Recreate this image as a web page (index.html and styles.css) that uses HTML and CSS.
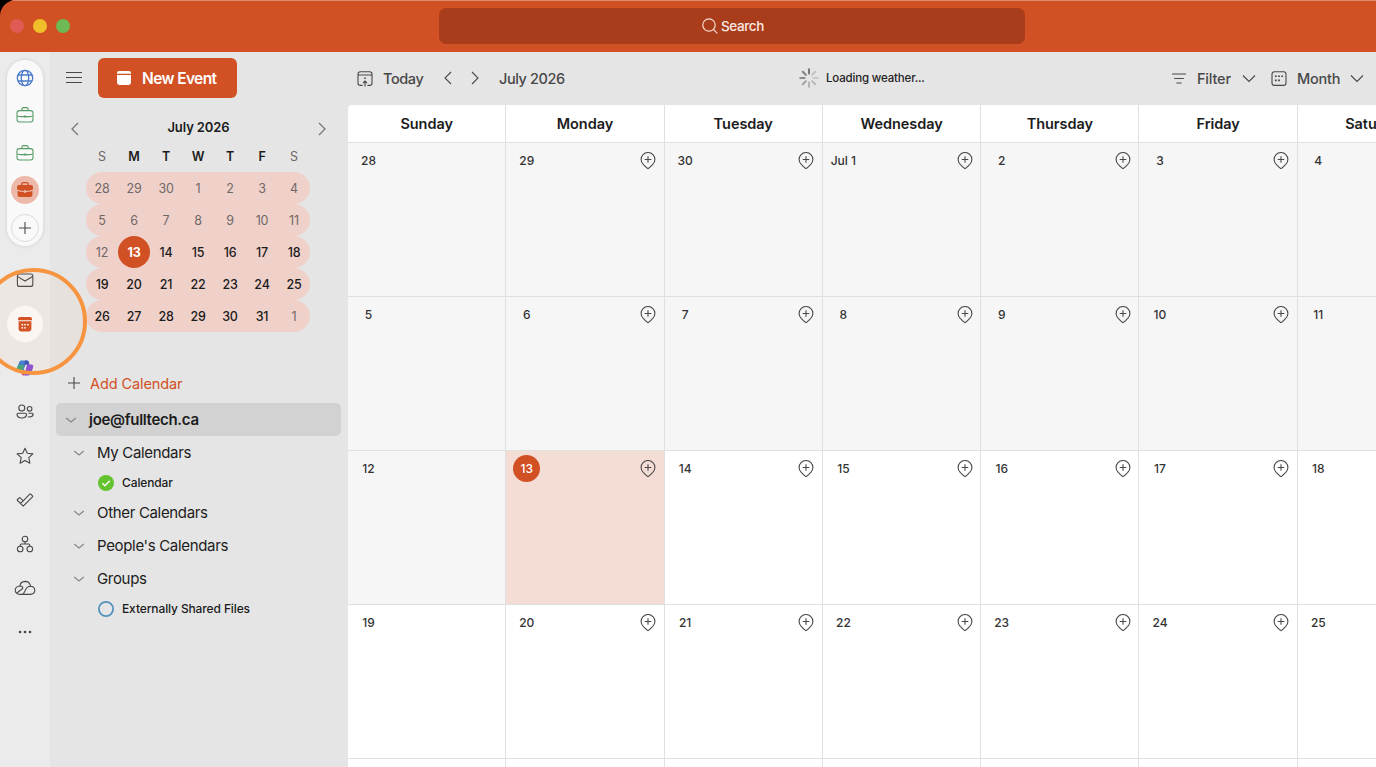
FILE: index.html
```html
<!DOCTYPE html>
<html lang="en">
<head>
    <meta charset="UTF-8">
    <meta name="viewport" content="width=device-width, initial-scale=1.0">
    <title>Calendar</title>
    <link rel="stylesheet" href="styles.css">
</head>
<body>
    <!-- Shared icons -->
    <svg class="sprite">
        <symbol id="pin" viewBox="0 0 16 18">
            <path d="M8 16.6 C7.2 16.6 5.2 14.2 3.2 12.4 A6.9 6.9 0 1 1 12.8 12.4 C10.8 14.2 8.8 16.6 8 16.6Z M8 4.2 V10.8 M4.7 7.5 H11.3"/>
        </symbol>
        <symbol id="briefcase" viewBox="0 0 18 18">
            <rect x="1" y="4.6" width="16" height="11.4" rx="2.4"/>
            <path d="M5.8 4.6 V3.4 Q5.8 1.6 7.4 1.6 H10.6 Q12.2 1.6 12.2 3.4 V4.6 M1.4 10 Q3 10.6 5 10.6 H13 Q15 10.6 16.6 10 M9 9.3 V11.8"/>
        </symbol>
        <symbol id="down" viewBox="0 0 12 8">
            <path d="M1.2 2 L6 6 L10.8 2"/>
        </symbol>
        <symbol id="left" viewBox="0 0 10 14">
            <path d="M8 1 L2 7 L8 13"/>
        </symbol>
        <symbol id="right" viewBox="0 0 10 14">
            <path d="M2 1 L8 7 L2 13"/>
        </symbol>
    </svg>

    <div class="window">
        <header class="titlebar">
            <div class="lights">
                <span class="light red"></span>
                <span class="light yellow"></span>
                <span class="light green"></span>
            </div>
            <div class="search">
                <svg class="icon" width="16" height="16" viewBox="0 0 16 16"><circle cx="7" cy="7" r="6.2"/><path d="M11.5 11.5 L15.3 15.3"/></svg>
                <span>Search</span>
            </div>
        </header>

        <div class="main">
            <nav class="rail">
                <div class="accounts">
                    <span class="account"><svg class="icon globe" width="18" height="18" viewBox="0 0 18 18"><circle cx="9" cy="9" r="7.7"/><ellipse cx="9" cy="9" rx="3.7" ry="7.7"/><path d="M2 6 H16 M2 12 H16"/></svg></span>
                    <span class="account"><svg class="icon case" width="18" height="18"><use href="#briefcase"/></svg></span>
                    <span class="account"><svg class="icon case" width="18" height="18"><use href="#briefcase"/></svg></span>
                    <span class="account current">
                        <svg width="18" height="18" viewBox="0 0 18 18"><path fill="none" stroke="#d15024" stroke-width="1.4" d="M5.8 4.4 V3 Q5.8 1.6 7.4 1.6 H10.6 Q12.2 1.6 12.2 3 V4.4"/><path fill="#d15024" d="M3 4 H15 Q17 4 17 6 V8.6 Q14 10 9.8 10 V9.1 H8.2 V10 Q4 10 1 8.6 V6 Q1 4 3 4Z M1.6 10 Q4 11 8.2 11 V12 H9.8 V11 Q14 11 16.4 10 V14 Q16.4 16 14.4 16 H3.6 Q1.6 16 1.6 14Z"/></svg>
                    </span>
                    <span class="account add"><svg class="icon" width="14" height="14" viewBox="0 0 14 14"><path d="M7 1 V13 M1 7 H13"/></svg></span>
                </div>
                <div class="apps">
                    <span class="app"><svg class="icon" width="18" height="18" viewBox="0 0 18 18"><rect x="1.4" y="3" width="15.4" height="12.4" rx="2"/><path d="M1.6 5.6 L9 10 L16.6 5.6"/></svg></span>
                    <span class="app"><span class="app-active"><svg width="16" height="16" viewBox="0 0 16 16"><path fill="#d15024" d="M3 1 H13 Q15 1 15 3 V4.2 H1 V3 Q1 1 3 1Z M1.6 5.2 H14.4 V13 Q14.4 15.4 12 15.4 H4 Q1.6 15.4 1.6 13Z"/><g fill="#fff"><circle cx="5.3" cy="8.7" r="0.9"/><circle cx="8" cy="8.7" r="0.9"/><circle cx="10.9" cy="8.7" r="0.9"/><circle cx="5.3" cy="11.8" r="0.9"/><circle cx="8" cy="11.8" r="0.9"/></g></svg></span></span>
                    <span class="app"><svg width="18" height="18" viewBox="0 0 18 18"><path fill="#3f7fd6" d="M5 1.6 H11 Q12.4 1.6 12.9 3.4 L13.4 5.5 H9.4 L7.6 11.6 H2.6 Q0.4 11.6 1.2 9 L3 3.4 Q3.6 1.6 5 1.6Z"/><path fill="#3da77e" d="M1 9 L2 6 H8 L6.6 11.6 H3 Q0.6 11.6 1 9Z"/><path fill="#8a4fd8" d="M11 5.5 H15.2 Q17.8 5.5 17.2 8 L15.4 14 Q14.8 16.4 12.4 16.4 H8 L9.5 11.6Z"/><path fill="#d8527c" d="M4.8 11.6 H9.5 L8 16.4 H7 Q5.6 16.4 5.2 14Z"/><path fill="#3552b8" d="M9 1.6 H11 Q12.4 1.6 12.9 3.4 L13.4 5.5 H9.4 L8.4 8Z"/></svg></span>
                    <span class="app"><svg class="icon" width="18" height="18" viewBox="0 0 18 18"><circle cx="5.8" cy="5" r="3"/><circle cx="13.6" cy="5.8" r="2.3"/><path d="M2.2 10.2 H9.4 Q10.6 10.2 10.6 11.4 Q10.4 15 5.8 15 Q1.2 15 1 11.4 Q1 10.2 2.2 10.2Z M12.4 10.2 H16 Q17.2 10.2 17.2 11.2 Q16.8 14 13.6 14 L11.8 13.7"/></svg></span>
                    <span class="app"><svg class="icon" width="18" height="18" viewBox="0 0 18 18"><path stroke-linejoin="round" d="M9 1.2 L11.3 6.2 L16.9 6.9 L12.8 10.7 L13.9 16.2 L9 13.5 L4.1 16.2 L5.2 10.7 L1.1 6.9 L6.7 6.2Z"/></svg></span>
                    <span class="app"><svg class="icon" width="18" height="18" viewBox="0 0 18 18"><path stroke-linejoin="round" d="M7.2 15.2 L1.5 9.5 Q1 9 1.5 8.5 L3.2 6.8 Q3.7 6.3 4.2 6.8 L7.2 9.8 L13.8 3.2 Q14.3 2.7 14.8 3.2 L16.5 4.9 Q17 5.4 16.5 5.9Z M4.5 12.5 L7.2 9.8"/></svg></span>
                    <span class="app"><svg class="icon" width="18" height="18" viewBox="0 0 18 18"><circle cx="9" cy="4" r="2.8"/><circle cx="4.2" cy="14" r="2.8"/><circle cx="13.8" cy="14" r="2.8"/><path d="M9 6.8 V9 M4.2 11.2 V10.2 Q4.2 9 5.4 9 H12.6 Q13.8 9 13.8 10.2 V11.2"/></svg></span>
                    <span class="app"><svg class="icon" width="22" height="18" viewBox="0 0 22 18"><path d="M6 15.4 H16.4 Q20.8 15 20.8 11.2 Q20.6 7.4 16.6 7.2 Q15.6 2.4 11 2.4 Q6.6 2.6 5.8 7 Q1.4 7.4 1.2 11.2 Q1.4 15 6 15.4Z M2.8 14 L8 10 Q9.4 9 8.4 7.8 Q7.6 7 5.8 7 M8.6 15.4 Q9.6 14.8 11 12 Q12.6 7.2 16.6 7.2"/></svg></span>
                    <span class="app"><svg width="14" height="4" viewBox="0 0 14 4" fill="#444"><circle cx="2" cy="2" r="1.3"/><circle cx="7" cy="2" r="1.3"/><circle cx="12" cy="2" r="1.3"/></svg></span>
                </div>
            </nav>

            <aside class="sidebar">
                <div class="side-top">
                    <svg class="icon" width="18" height="14" viewBox="0 0 18 14"><path d="M1 1.5 H17 M1 6.5 H17 M1 11.5 H17"/></svg>
                    <button class="new-event">
                        <svg width="16" height="16" viewBox="0 0 16 16" fill="#fff"><path d="M3 1 H13 Q15 1 15 3 V3.8 H1 V3 Q1 1 3 1Z M1 5 H15 V12.6 Q15 15 12.6 15 H3.4 Q1 15 1 12.6Z"/></svg>
                        <span>New Event</span>
                    </button>
                </div>

                <div class="mini-head">
                    <svg class="icon" width="10" height="14"><use href="#left"/></svg>
                    <span>July 2026</span>
                    <svg class="icon" width="10" height="14"><use href="#right"/></svg>
                </div>
                <div class="mini">
                    <div class="mini-row names"><span class="off">S</span><span>M</span><span>T</span><span>W</span><span>T</span><span>F</span><span class="off">S</span></div>
                    <div class="mini-row week"><span class="off">28</span><span class="off">29</span><span class="off">30</span><span class="off">1</span><span class="off">2</span><span class="off">3</span><span class="off">4</span></div>
                    <div class="mini-row week"><span class="off">5</span><span class="off">6</span><span class="off">7</span><span class="off">8</span><span class="off">9</span><span class="off">10</span><span class="off">11</span></div>
                    <div class="mini-row week"><span class="off">12</span><span class="today">13</span><span>14</span><span>15</span><span>16</span><span>17</span><span>18</span></div>
                    <div class="mini-row week"><span>19</span><span>20</span><span>21</span><span>22</span><span>23</span><span>24</span><span>25</span></div>
                    <div class="mini-row week"><span>26</span><span>27</span><span>28</span><span>29</span><span>30</span><span>31</span><span class="off">1</span></div>
                </div>

                <div class="add-calendar">
                    <svg class="icon" width="12" height="12" viewBox="0 0 12 12"><path d="M6 0 V12 M0 6 H12"/></svg>
                    <span>Add Calendar</span>
                </div>
                <div class="mailbox">
                    <svg class="icon chev" width="12" height="8"><use href="#down"/></svg>
                    <span>joe@fulltech.ca</span>
                </div>
                <div class="group"><svg class="icon chev" width="12" height="8"><use href="#down"/></svg><span>My Calendars</span></div>
                <div class="entry">
                    <svg width="16" height="16" viewBox="0 0 16 16"><circle cx="8" cy="8" r="8" fill="#63c22d"/><path fill="none" stroke="#fff" stroke-width="1.3" d="M4.4 8.3 L6.9 10.8 L11.8 5.7"/></svg>
                    <span>Calendar</span>
                </div>
                <div class="group"><svg class="icon chev" width="12" height="8"><use href="#down"/></svg><span>Other Calendars</span></div>
                <div class="group"><svg class="icon chev" width="12" height="8"><use href="#down"/></svg><span>People's Calendars</span></div>
                <div class="group"><svg class="icon chev" width="12" height="8"><use href="#down"/></svg><span>Groups</span></div>
                <div class="entry">
                    <svg width="16" height="16" viewBox="0 0 16 16"><circle cx="8" cy="8" r="7.1" fill="none" stroke="#5593bd" stroke-width="1.8"/></svg>
                    <span>Externally Shared Files</span>
                </div>
            </aside>

            <section class="calendar">
                <div class="toolbar">
                    <svg class="icon" width="16" height="16" viewBox="0 0 16 16"><path d="M5.6 14.4 H3.4 Q1 14.4 1 12.2 V3 Q1 0.8 3.4 0.8 H12.6 Q15 0.8 15 3 V12.2 Q15 14.4 12.6 14.4 H10.4 M1 4 H15 M8 10 V15.4 M6 12 L8 10 L10 12"/><path stroke-width="1.6" d="M7.2 7.2 H8.8"/></svg>
                    <span class="today-label">Today</span>
                    <svg class="icon prev" width="10" height="14"><use href="#left"/></svg>
                    <svg class="icon next" width="10" height="14"><use href="#right"/></svg>
                    <span class="month-label">July 2026</span>
                    <div class="weather">
                        <svg width="20" height="20" viewBox="0 0 20 20" stroke-width="2" stroke-linecap="round" stroke="#777">
                            <path d="M10 1.2 V5.6"/>
                            <path opacity="0.3" d="M16.2 3.8 L13.1 6.9"/>
                            <path opacity="0.25" d="M18.8 10 H14.4"/>
                            <path opacity="0.4" d="M16.2 16.2 L13.1 13.1"/>
                            <path opacity="0.45" d="M10 18.8 V14.4"/>
                            <path opacity="0.6" d="M3.8 16.2 L6.9 13.1"/>
                            <path opacity="0.8" d="M1.2 10 H5.6"/>
                            <path opacity="0.9" d="M3.8 3.8 L6.9 6.9"/>
                        </svg>
                        <span>Loading weather...</span>
                    </div>
                    <div class="tools">
                        <svg class="icon" width="16" height="12" viewBox="0 0 16 12"><path d="M1 1 H15 M3.2 5.5 H12.8 M5.4 10 H10.6"/></svg>
                        <span class="filter-label">Filter</span>
                        <svg class="icon" width="14" height="9" viewBox="0 0 14 9"><path d="M1 1.5 L7 7.5 L13 1.5"/></svg>
                        <svg class="icon grid-icon" width="16" height="16" viewBox="0 0 16 16"><rect x="1" y="0.8" width="14" height="13.6" rx="2.4"/><path stroke-width="1.6" stroke-dasharray="1.8 1.4" d="M3.9 5.2 H12.4 M3.9 9.4 H8.9"/></svg>
                        <span class="view-label">Month</span>
                        <svg class="icon" width="14" height="9" viewBox="0 0 14 9"><path d="M1 1.5 L7 7.5 L13 1.5"/></svg>
                    </div>
                </div>

                <div class="month">
                    <div class="row head">
                        <div>Sunday</div><div>Monday</div><div>Tuesday</div><div>Wednesday</div><div>Thursday</div><div>Friday</div><div>Saturday</div>
                    </div>
                    <div class="row days">
                        <div class="day past"><span>28</span></div>
                        <div class="day past"><span>29</span><svg class="icon pin"><use href="#pin"/></svg></div>
                        <div class="day past"><span>30</span><svg class="icon pin"><use href="#pin"/></svg></div>
                        <div class="day past"><span>Jul 1</span><svg class="icon pin"><use href="#pin"/></svg></div>
                        <div class="day past"><span>2</span><svg class="icon pin"><use href="#pin"/></svg></div>
                        <div class="day past"><span>3</span><svg class="icon pin"><use href="#pin"/></svg></div>
                        <div class="day past"><span>4</span></div>
                    </div>
                    <div class="row days">
                        <div class="day past"><span>5</span></div>
                        <div class="day past"><span>6</span><svg class="icon pin"><use href="#pin"/></svg></div>
                        <div class="day past"><span>7</span><svg class="icon pin"><use href="#pin"/></svg></div>
                        <div class="day past"><span>8</span><svg class="icon pin"><use href="#pin"/></svg></div>
                        <div class="day past"><span>9</span><svg class="icon pin"><use href="#pin"/></svg></div>
                        <div class="day past"><span>10</span><svg class="icon pin"><use href="#pin"/></svg></div>
                        <div class="day past"><span>11</span></div>
                    </div>
                    <div class="row days">
                        <div class="day past"><span>12</span></div>
                        <div class="day now"><span>13</span><svg class="icon pin"><use href="#pin"/></svg></div>
                        <div class="day"><span>14</span><svg class="icon pin"><use href="#pin"/></svg></div>
                        <div class="day"><span>15</span><svg class="icon pin"><use href="#pin"/></svg></div>
                        <div class="day"><span>16</span><svg class="icon pin"><use href="#pin"/></svg></div>
                        <div class="day"><span>17</span><svg class="icon pin"><use href="#pin"/></svg></div>
                        <div class="day"><span>18</span></div>
                    </div>
                    <div class="row days">
                        <div class="day"><span>19</span></div>
                        <div class="day"><span>20</span><svg class="icon pin"><use href="#pin"/></svg></div>
                        <div class="day"><span>21</span><svg class="icon pin"><use href="#pin"/></svg></div>
                        <div class="day"><span>22</span><svg class="icon pin"><use href="#pin"/></svg></div>
                        <div class="day"><span>23</span><svg class="icon pin"><use href="#pin"/></svg></div>
                        <div class="day"><span>24</span><svg class="icon pin"><use href="#pin"/></svg></div>
                        <div class="day"><span>25</span></div>
                    </div>
                    <div class="row last">
                        <div></div><div></div><div></div><div></div><div></div><div></div><div></div>
                    </div>
                </div>
            </section>
        </div>
        <div class="marker"></div>
    </div>
</body>
</html>
```
FILE: styles.css
```css
* {
    box-sizing: border-box;
}

body {
    margin: 0;
    background: #000;
    font-family: Inter, "Liberation Sans", sans-serif;
    color: #1c1c1c;
    overflow: hidden;
}

.sprite {
    display: none;
}

.icon {
    fill: none;
    stroke: #484848;
    stroke-width: 1.1;
    flex-shrink: 0;
}

.window {
    position: relative;
    display: flex;
    flex-direction: column;
    width: 1376px;
    height: 767px;
    border-top-left-radius: 16px;
    overflow: hidden;
}

/* Title bar */
.titlebar {
    display: flex;
    height: 52px;
    flex-shrink: 0;
    background: #d15024;
    border-top: 1px solid #e08a6c;
}

.lights {
    display: flex;
    gap: 9px;
    width: 439px;
    padding: 18px 0 0 10px;
}

.light {
    width: 14px;
    height: 14px;
    border-radius: 50%;
}

.red { background: #df5b53; }
.yellow { background: #efc02a; }
.green { background: #6dba54; }

.search {
    display: flex;
    align-items: center;
    justify-content: center;
    gap: 3px;
    width: 586px;
    height: 36px;
    margin-top: 7px;
    padding-left: 2px;
    border-radius: 7px;
    background: #a93d1b;
    color: #fbe9e3;
    font-size: 13.5px;
    font-weight: 500;
    letter-spacing: -0.4px;
}

.search .icon {
    stroke: #f6d9cf;
    stroke-width: 1.2;
}

.main {
    display: flex;
    flex: 1;
    min-height: 0;
    background: #e5e5e5;
}

/* App rail */
.rail {
    display: flex;
    flex-direction: column;
    align-items: center;
    width: 50px;
    padding-top: 8px;
    background: #ebebeb;
}

.accounts {
    display: flex;
    flex-direction: column;
    align-items: center;
    gap: 9.4px;
    width: 36px;
    height: 186px;
    padding-top: 4px;
    border-radius: 18px;
    background: #f9f9f9;
    box-shadow: 0 0 4px rgba(0, 0, 0, 0.12);
}

.account {
    display: flex;
    align-items: center;
    justify-content: center;
    width: 28px;
    height: 28px;
    border-radius: 50%;
    flex-shrink: 0;
}

.globe { stroke: #4a78cc; stroke-width: 1.3; }
.case { stroke: #589c68; }
.current { background: #edb9aa; }
.add { border: 1px solid #dcdcdc; }

.apps {
    display: flex;
    flex-direction: column;
    margin-top: 12.5px;
}

.app {
    display: flex;
    align-items: center;
    justify-content: center;
    width: 50px;
    height: 43.9px;
}

.app-active {
    display: flex;
    align-items: center;
    justify-content: center;
    width: 36px;
    height: 36px;
    border-radius: 50%;
    background: #fbfbfb;
}

/* Sidebar */
.sidebar {
    width: 297px;
    padding: 6px 6px 0;
}

.side-top {
    display: flex;
    align-items: center;
    gap: 15px;
    padding-left: 9px;
}

.new-event {
    display: flex;
    align-items: center;
    gap: 10px;
    width: 139px;
    height: 40px;
    padding: 0 0 0 18px;
    border: none;
    border-radius: 6px;
    background: #d15024;
    color: #fff;
    font-family: inherit;
    font-size: 15.5px;
    font-weight: 600;
    letter-spacing: -0.62px;
}

.mini-head {
    display: flex;
    align-items: center;
    justify-content: space-between;
    height: 30px;
    margin-top: 14px;
    padding: 0 14px;
    font-size: 13px;
    font-weight: 600;
    letter-spacing: -0.1px;
}

.mini-head .icon {
    margin-top: 3px;
    stroke: #777;
    stroke-width: 1.3;
}

.mini {
    width: 224px;
    margin: 0 0 0 30px;
    font-size: 12.5px;
    font-weight: 500;
    letter-spacing: -0.2px;
}

.mini-row {
    display: grid;
    grid-template-columns: repeat(7, 32px);
    height: 32px;
}

.mini-row span {
    display: flex;
    align-items: center;
    justify-content: center;
}

.names {
    height: 30px;
    padding-bottom: 2px;
    font-weight: 600;
}

.week {
    border-radius: 16px;
    background: #f0d1ca;
}

.mini-row .off {
    color: #6f6868;
    font-weight: 400;
}

.mini-row .today {
    border-radius: 50%;
    background: #d15024;
    color: #fff;
    font-weight: 700;
}

.add-calendar {
    display: flex;
    align-items: center;
    gap: 10px;
    height: 24px;
    margin-top: 39px;
    padding-left: 12px;
    color: #d15024;
    font-size: 14.5px;
    letter-spacing: -0.1px;
}

.mailbox {
    display: flex;
    align-items: center;
    gap: 12px;
    height: 33px;
    margin-top: 8px;
    padding-left: 9px;
    border-radius: 5px;
    background: #d2d2d2;
    font-size: 15px;
    font-weight: 600;
    letter-spacing: -0.3px;
}

.chev {
    stroke: #888;
    stroke-width: 1.3;
}

.group {
    display: flex;
    align-items: center;
    gap: 12px;
    height: 33px;
    padding-left: 17px;
    font-size: 15px;
    letter-spacing: -0.33px;
}

.entry {
    display: flex;
    align-items: center;
    gap: 8px;
    height: 27px;
    padding-left: 42px;
    font-size: 12px;
    font-weight: 500;
    letter-spacing: -0.12px;
}

/* Calendar */
.calendar {
    flex: 1;
    min-width: 0;
    overflow: hidden;
}

.toolbar {
    display: flex;
    align-items: center;
    height: 53px;
    padding-left: 10px;
    font-size: 14.5px;
    font-weight: 500;
    letter-spacing: -0.4px;
    color: #484848;
}

.toolbar > * {
    flex-shrink: 0;
}

.toolbar > span {
    padding-bottom: 1px;
}

.toolbar > .prev,
.toolbar > .next {
    margin-bottom: 1px;
}

.today-label { width: 50px; margin-left: 10px; }
.prev { margin-left: 10px; }
.next { margin-left: 17px; }
.month-label { width: 300px; margin-left: 19px; }

.weather {
    display: flex;
    align-items: center;
    gap: 7px;
    width: 372px;
    padding-bottom: 1px;
    color: #222;
    font-size: 11.5px;
    letter-spacing: -0.17px;
}

.tools {
    display: flex;
    align-items: center;
    letter-spacing: -0.2px;
}

.filter-label { width: 35px; margin: 0 10px; }
.grid-icon { margin-left: 15px; }
.view-label { width: 43px; margin: 0 10px 0 10px; }

.month {
    width: 1109px;
    margin-left: 1px;
    border-top-left-radius: 4px;
    background: #fff;
    overflow: hidden;
}

.row {
    display: grid;
    grid-template-columns: repeat(7, 158.3px);
}

.row > div {
    border-right: 1px solid #e0e0e0;
    border-bottom: 1px solid #dfe1e1;
}

.head {
    height: 38.3px;
    font-size: 14.5px;
    font-weight: 600;
    line-height: 37px;
    letter-spacing: -0.05px;
    text-align: center;
}

.days {
    height: 153.85px;
}

.day {
    display: flex;
    justify-content: space-between;
    padding: 4px 7.6px 0 7px;
}

.day span {
    width: 27px;
    height: 27px;
    border-radius: 50%;
    font-size: 12px;
    font-weight: 500;
    line-height: 27px;
    text-align: center;
    white-space: nowrap;
    color: #333;
}

.past {
    background: #f6f6f6;
}

.now {
    background: #f3ddd5;
}

.now span {
    background: #d15024;
    color: #fff;
}

.pin {
    width: 16px;
    height: 18px;
    margin-top: 5px;
}

.row.last > div {
    height: 30px;
    border-bottom: none;
}

/* Highlight ring over the calendar button */
.marker {
    position: absolute;
    left: -20px;
    top: 268px;
    width: 107px;
    height: 107px;
    border: 4.5px solid #f79440;
    border-radius: 50%;
    background: rgba(247, 148, 64, 0.05);
}
```
